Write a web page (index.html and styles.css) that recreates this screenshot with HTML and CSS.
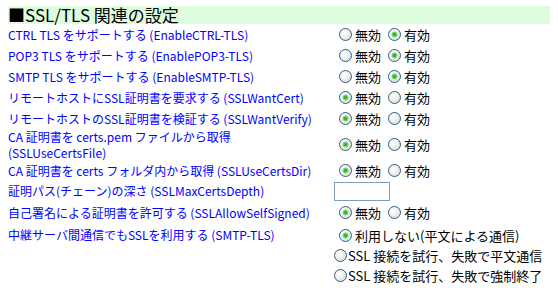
FILE: index.html
```html
<!DOCTYPE html>
<html lang="ja">
    <head>
        <meta charset="UTF-8">
        <title>SSL/TLS 関連の設定</title>
        <link rel="stylesheet" href="styles.css">
    </head>
    <body>
    <h2 class="section">■SSL/TLS 関連の設定</h2>
    <table class="settings">
        <tr class="row">
            <td class="name">CTRL TLS をサポートする (EnableCTRL-TLS)</td>
            <td class="opt">
                <label class="choice"><input type="radio" name="ctrl">無効</label>
                <label class="choice"><input type="radio" name="ctrl" checked>有効</label>
            </td>
        </tr>
        <tr class="row">
            <td class="name">POP3 TLS をサポートする (EnablePOP3-TLS)</td>
            <td class="opt">
                <label class="choice"><input type="radio" name="pop3">無効</label>
                <label class="choice"><input type="radio" name="pop3" checked>有効</label>
            </td>
        </tr>
        <tr class="row">
            <td class="name">SMTP TLS をサポートする (EnableSMTP-TLS)</td>
            <td class="opt">
                <label class="choice"><input type="radio" name="smtp">無効</label>
                <label class="choice"><input type="radio" name="smtp" checked>有効</label>
            </td>
        </tr>
        <tr class="row">
            <td class="name">リモートホストにSSL証明書を要求する (SSLWantCert)</td>
            <td class="opt">
                <label class="choice"><input type="radio" name="wantcert" checked>無効</label>
                <label class="choice"><input type="radio" name="wantcert">有効</label>
            </td>
        </tr>
        <tr class="row">
            <td class="name">リモートホストのSSL証明書を検証する (SSLWantVerify)</td>
            <td class="opt">
                <label class="choice"><input type="radio" name="verify" checked>無効</label>
                <label class="choice"><input type="radio" name="verify">有効</label>
            </td>
        </tr>
        <tr class="row-tall">
            <td class="name">CA 証明書を certs.pem ファイルから取得<br>(SSLUseCertsFile)</td>
            <td class="opt">
                <label class="choice"><input type="radio" name="certsfile" checked>無効</label>
                <label class="choice"><input type="radio" name="certsfile">有効</label>
            </td>
        </tr>
        <tr class="row-short">
            <td class="name">CA 証明書を certs フォルダ内から取得 (SSLUseCertsDir)</td>
            <td class="opt">
                <label class="choice"><input type="radio" name="certsdir" checked>無効</label>
                <label class="choice"><input type="radio" name="certsdir">有効</label>
            </td>
        </tr>
        <tr class="row-short">
            <td class="name">証明パス(チェーン)の深さ (SSLMaxCertsDepth)</td>
            <td class="opt"><input type="text" class="depth"></td>
        </tr>
        <tr class="row-mid">
            <td class="name">自己署名による証明書を許可する (SSLAllowSelfSigned)</td>
            <td class="opt">
                <label class="choice"><input type="radio" name="selfsigned" checked>無効</label>
                <label class="choice"><input type="radio" name="selfsigned">有効</label>
            </td>
        </tr>
        <tr class="row-list">
            <td class="name">中継サーバ間通信でもSSLを利用する (SMTP-TLS)</td>
            <td class="opt">
                <label class="line"><input type="radio" name="relay" checked>利用しない(平文による通信)</label>
                <label class="line tight"><input type="radio" name="relay">SSL 接続を試行、失敗で平文通信</label>
                <label class="line tight"><input type="radio" name="relay">SSL 接続を試行、失敗で強制終了</label>
            </td>
        </tr>
    </table>
    </body>
</html>
```

FILE: styles.css
```css
*{
    margin:0;
    padding:0;
}
body{
    margin:0 8px;
    font-family:"Noto Sans CJK JP","DejaVu Sans",sans-serif;
    background:#ffffff;
}
.section{
    margin-top:6px;
    height:18px;
    line-height:18px;
    font-size:17px;
    font-weight:normal;
    color:#000000;
    background:#ddfcdd;
}
.settings{
    width:542px;
    border-collapse:collapse;
}
.settings td{
    padding:0;
    vertical-align:middle;
}
.settings .name{
    width:326px;
    font-size:12px;
    line-height:16px;
    color:#0000ff;
    white-space:nowrap;
}
.settings .opt{
    font-size:13px;
    color:#000000;
    white-space:nowrap;
}
.row{
    height:21px;
}
.row-tall{
    height:32px;
}
.row-short{
    height:19px;
}
.row-short + .row-short{
    height:20px;
}
.row-mid{
    height:24px;
}
.row-list .name{
    vertical-align:top;
    padding-top:2px;
}
.choice{
    display:inline-flex;
    align-items:center;
    margin-right:-1px;
}
.line{
    display:flex;
    align-items:center;
    height:20px;
}
input[type=radio]{
    appearance:none;
    -webkit-appearance:none;
    width:13px;
    height:13px;
    margin:0 3px 0 5px;
    border:1px solid #2f5f8c;
    border-radius:50%;
    background:radial-gradient(circle at 35% 35%, #ffffff 0, #f2f2ee 40%, #d6d6cc 100%);
    flex:none;
}
input[type=radio]:checked{
    background:radial-gradient(circle, #1fa81f 0, #3cc23c 1.5px, #9fe09f 2.8px, transparent 3.4px),
        radial-gradient(circle at 35% 35%, #ffffff 0, #f2f2ee 40%, #d6d6cc 100%);
}
.tight input[type=radio]{
    margin:0 1px 0 0;
}
.depth{
    display:block;
    width:56px;
    height:19px;
    border:1px solid #7f9db9;
    box-sizing:border-box;
    background:#ffffff;
}
```
